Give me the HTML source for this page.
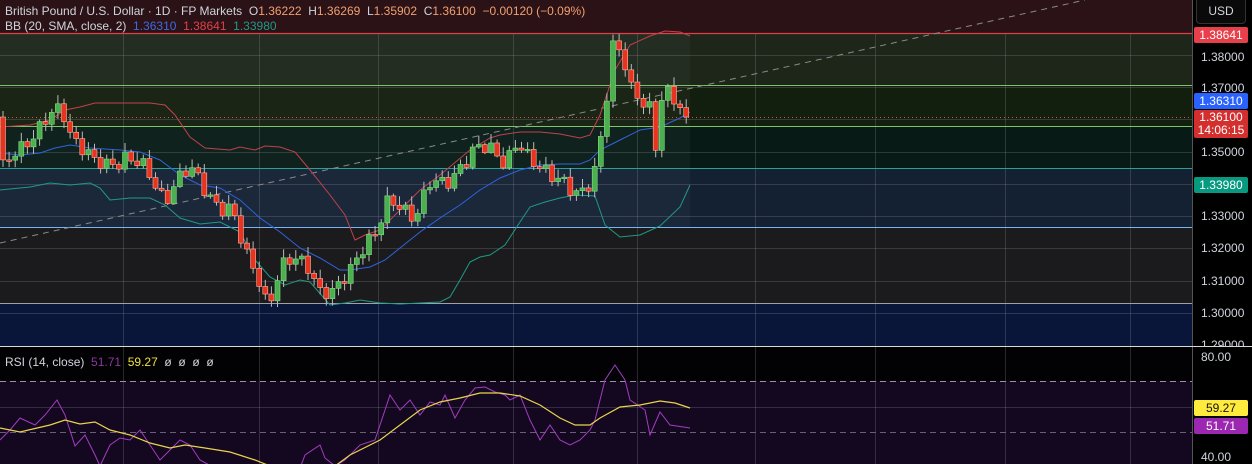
<!DOCTYPE html>
<html><head><meta charset="utf-8">
<style>
*{margin:0;padding:0;box-sizing:border-box}
body{width:1252px;height:464px;overflow:hidden;background:#000;font-family:"Liberation Sans",sans-serif;position:relative}
svg{position:absolute;left:0;top:0}
.t{position:absolute;font-size:12px;color:#d1d4dc;white-space:nowrap}
.ax{position:absolute;left:1201px;font-size:12px;color:#d1d4dc}
.box{position:absolute;left:1194px;width:54px;height:16px;border-radius:2px;font-size:12px;color:#fff;text-align:center;line-height:16px}
</style></head><body>
<svg id="s" width="1252" height="464" xmlns="http://www.w3.org/2000/svg">
<rect x="0" y="0" width="1192" height="33" fill="#2a1216"/>
<rect x="0" y="33" width="1192" height="52" fill="#1d2619"/>
<rect x="0" y="85" width="1192" height="41" fill="#121e0e"/>
<rect x="0" y="126" width="1192" height="42" fill="#071a15"/>
<rect x="0" y="168" width="1192" height="59" fill="#132133"/>
<rect x="0" y="227" width="1192" height="76" fill="#1b1b1d"/>
<rect x="0" y="303" width="1192" height="43" fill="#09163a"/>
<rect x="0" y="346" width="1192" height="35" fill="#020104"/>
<rect x="0" y="381" width="1192" height="83" fill="#140820"/>
<rect x="0" y="33" width="690" height="194" fill="rgba(255,255,255,0.035)"/>
<g id="grid" stroke="rgba(140,140,150,0.28)" stroke-width="1"></g>
<line x1="0" y1="33.5" x2="1192" y2="33.5" stroke="#e0404a" stroke-width="1.2"/>
<line x1="0" y1="85.5" x2="1192" y2="85.5" stroke="#7cc46a"/>
<line x1="0" y1="126.5" x2="1192" y2="126.5" stroke="#7cc46a"/>
<line x1="0" y1="168.5" x2="1192" y2="168.5" stroke="#2aa198"/>
<line x1="0" y1="227.5" x2="1192" y2="227.5" stroke="#7ab4f0"/>
<line x1="0" y1="303.5" x2="1192" y2="303.5" stroke="#a0a0a8"/>
<line x1="0" y1="117.5" x2="1192" y2="117.5" stroke="#e0553a" stroke-dasharray="1 3"/>
<line x1="0" y1="243" x2="1085" y2="0" stroke="#8a8a8a" stroke-dasharray="6 5"/>
<polyline fill="none" stroke="#c0424c" stroke-width="1" points="0,127 30,125 50,120 65,110 80,107 95,103 120,103 150,103 165,105 175,115 190,137 205,148 230,150 240,147 255,150 265,146 280,147 295,152 310,170 330,195 345,215 355,240 365,235 380,230 395,215 420,190 440,175 470,150 490,138 500,135 520,132 540,132 560,134 580,138 590,135 600,115 615,70 630,45 650,36 665,31 680,32 690,36"/>
<polyline fill="none" stroke="#2f64e0" stroke-width="1" points="0,153 20,155 40,153 55,148 70,145 90,148 120,150 140,152 160,160 180,175 200,185 220,188 240,200 260,218 280,232 300,248 320,258 340,270 350,270 370,267 385,260 400,248 420,232 440,218 460,205 480,190 500,178 520,170 540,165 560,164 580,164 590,160 600,150 620,140 640,130 660,127 680,118 690,112"/>
<polyline fill="none" stroke="#1f9a85" stroke-width="1" points="0,190 30,187 50,183 70,185 90,183 100,188 110,200 130,198 150,198 165,205 180,218 200,224 220,222 240,232 255,260 270,277 285,285 300,280 310,282 330,305 345,303 360,300 380,303 400,304 420,303 440,302 450,297 460,280 470,262 480,257 490,255 505,245 520,222 530,207 545,202 560,198 575,195 595,196 605,225 620,237 640,235 660,226 680,207 690,185"/>
<g id="candles"></g>
<line x1="0" y1="381.5" x2="1192" y2="381.5" stroke="#9a90a8" stroke-dasharray="6 4"/>
<line x1="0" y1="432.5" x2="1192" y2="432.5" stroke="#6a5c7a" stroke-dasharray="6 4"/>
<polyline fill="none" stroke="#a23dbf" stroke-width="1" points="0,440 10,430 20,418 35,425 45,415 57,400 65,415 75,446 85,435 95,455 100,466 110,445 120,438 130,440 140,430 150,445 160,460 170,450 180,440 190,445 200,460 215,468 300,468 305,455 320,445 325,458 335,466 345,460 360,445 375,440 385,410 390,395 400,410 410,400 420,415 430,402 440,405 445,395 455,418 465,400 475,388 485,387 495,392 505,395 510,400 520,395 530,420 540,440 550,425 560,440 570,445 580,440 590,430 595,420 605,380 615,365 625,380 630,400 645,410 650,435 660,412 670,425 690,428"/>
<polyline fill="none" stroke="#e8d44d" stroke-width="1.2" points="0,428 20,432 50,425 65,420 80,424 95,422 110,430 130,435 150,443 170,448 185,445 205,448 230,452 255,460 270,466 335,466 350,455 380,440 400,425 420,410 440,402 460,398 480,393 500,393 520,396 540,405 560,418 575,425 590,425 600,418 620,407 640,405 660,401 675,403 690,408"/>
<line x1="1192.5" y1="0" x2="1192.5" y2="464" stroke="#555"/>
<line x1="0" y1="346.5" x2="1252" y2="346.5" stroke="#d8d8d8"/>
</svg>
<div class="t" style="left:5px;top:4px">British Pound / U.S. Dollar · 1D · FP Markets &nbsp;O<span style="color:#f2a070">1.36222</span> &nbsp;H<span style="color:#f2a070">1.36269</span> &nbsp;L<span style="color:#f2a070">1.35902</span> &nbsp;C<span style="color:#f2a070">1.36100</span> &nbsp;<span style="color:#f2a070">−0.00120 (−0.09%)</span></div>
<div class="t" style="left:5px;top:19px">BB (20, SMA, close, 2) &nbsp;<span style="color:#4169e1">1.36310</span> &nbsp;<span style="color:#e0404a">1.38641</span> &nbsp;<span style="color:#1f9a85">1.33980</span></div>
<div class="t" style="left:5px;top:355px">RSI (14, close) &nbsp;<span style="color:#8a3aa0">51.71</span> &nbsp;<span style="color:#f0e040">59.27</span> &nbsp;ø &nbsp;ø &nbsp;ø &nbsp;ø</div>
<div style="position:absolute;left:1196px;top:0;width:50px;height:24px;border:1px solid #333;border-top:none;border-radius:0 0 4px 4px;background:#0a0a0a;color:#d1d4dc;font-size:12px;text-align:center;line-height:22px">USD</div>
<div class="ax" style="top:50px">1.38000</div>
<div class="ax" style="top:81px">1.37000</div>
<div class="ax" style="top:145px">1.35000</div>
<div class="ax" style="top:209px">1.33000</div>
<div class="ax" style="top:241px">1.32000</div>
<div class="ax" style="top:274px">1.31000</div>
<div class="ax" style="top:306px">1.30000</div>
<div class="ax" style="top:338px;height:8px;overflow:hidden">1.29000</div>
<div class="ax" style="top:350px">80.00</div>
<div class="ax" style="top:450px">40.00</div>
<div class="box" style="top:27px;background:#e8404a">1.38641</div>
<div class="box" style="top:93px;background:#2962ff">1.36310</div>
<div class="box" style="top:110px;height:28px;background:#d32f2f;line-height:13px;padding-top:1px">1.36100<br>14:06:15</div>
<div class="box" style="top:177px;background:#089981">1.33980</div>
<div class="box" style="top:400px;background:#ffeb3b;color:#111">59.27</div>
<div class="box" style="top:418px;background:#9c27b0">51.71</div>
<script>
(function(){
var NS="http://www.w3.org/2000/svg";
function el(t,a,p){var e=document.createElementNS(NS,t);for(var k in a)e.setAttribute(k,a[k]);p.appendChild(e);return e;}
var g=document.getElementById("grid");
[123,259,378,513,637,755,875,1005,1130].forEach(function(x){el("line",{x1:x+.5,y1:33,x2:x+.5,y2:464},g)});
[55,87,119,152,184,216,248,281,313,407].forEach(function(y){el("line",{x1:0,y1:y+.5,x2:1192,y2:y+.5},g)});
var K=[[3,170],[15,150],[27,140],[40,130],[52,115],[62,108],[72,135],[85,150],[95,165],[110,165],[125,155],[140,165],[155,185],[165,200],[175,180],[190,170],[205,190],[220,205],[232,210],[245,255],[258,275],[268,305],[280,270],[295,260],[310,265],[320,290],[335,295],[350,270],[365,240],[375,235],[388,205],[400,205],[415,215],[430,185],[445,185],[460,165],[475,150],[490,150],[505,160],[518,140],[530,165],[545,170],[560,175],[570,190],[580,200],[592,180],[598,155],[605,105],[613,45],[622,55],[632,95],[642,100],[650,105],[656,145],[662,95],[670,95],[678,110],[684,112],[690,117]];
function interp(x){for(var i=0;i<K.length-1;i++){if(x>=K[i][0]&&x<=K[i+1][0]){var f=(x-K[i][0])/(K[i+1][0]-K[i][0]);return K[i][1]+f*(K[i+1][1]-K[i][1]);}}return K[K.length-1][1];}
var cg=document.getElementById("candles");var prev=interp(0);
for(var x=3;x<=690;x+=6.1){
 var c=interp(x)+Math.sin(x*1.7)*7+Math.cos(x*0.9)*4;
 if(x>686)c=117;
 var o=prev;var yt=Math.min(o,c),yb=Math.max(o,c);
 var up=c<o;var h=Math.max(yb-yt,1.5);
 var w1=2+Math.abs(Math.sin(x*2.3))*7,w2=1+Math.abs(Math.cos(x*3.1))*6;
 el("line",{x1:x,y1:yt-w1,x2:x,y2:yb+w2,stroke:"#bbb","stroke-width":1},cg);
 el("rect",{x:x-2.5,y:yt,width:5,height:h,fill:up?"#4caf50":"#e8331f",stroke:up?"#7ee07e":"#ffb0a0","stroke-width":0.6},cg);
 prev=c;
}
})();
</script>
</body></html>
